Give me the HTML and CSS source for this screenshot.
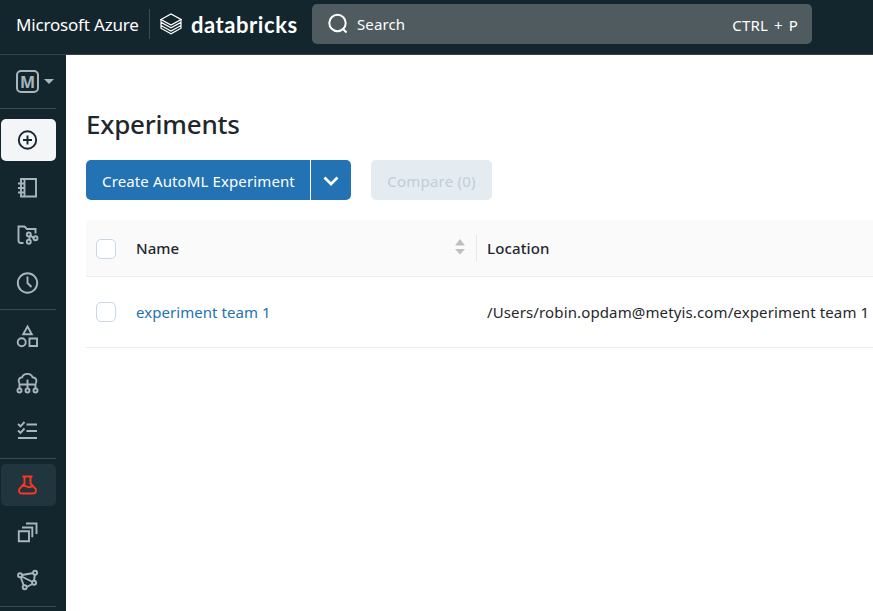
FILE: index.html
```html
<!DOCTYPE html>
<html lang="en">
<head>
<meta charset="utf-8">
<title>Experiments</title>
<link rel="stylesheet" href="styles.css">
</head>
<body>
<header class="topbar">
  <span class="azure">Microsoft Azure</span>
  <span class="brand-divider"></span>
  <svg class="brand-mark" width="22" height="22" viewBox="0 0 22 22"><path d="M1 6.500 11 1l10 5.500-10 5.500z"/><path d="M1 6.500v2.800l10 5.500 10-5.500V6.800M1 9.300v3.200L11 18l10-5.500V9.300M1 12.500v2.700l10 5.500 10-5.500v-2.700"/></svg>
  <span class="brand">databricks</span>
  <div class="search">
    <svg width="22" height="22" viewBox="0 0 22 22"><circle cx="10.500" cy="10" r="8.200"/><path d="m16 16 3.500 3.500"/></svg>
    <span class="search-label">Search</span>
    <span class="shortcut">CTRL + P</span>
  </div>
</header>
<div class="shell">
  <nav class="sidebar">
    <div class="workspace"><span class="workspace-badge">M</span><span class="caret"></span></div>
    <div class="group first">
      <a class="item create"><svg viewBox="0 0 24 24"><circle cx="12" cy="12" r="8.700"/><path d="M12 7.500v9M7.500 12h9"/></svg></a>
      <a class="item"><svg viewBox="0 0 24 24"><path d="M5.500 3h15v17.500h-15zM9 3v17.500M2.500 7.500H9M2.500 12H9M2.500 16.500H9"/></svg></a>
      <a class="item"><svg viewBox="0 0 24 24"><path d="M8 20H5.500q-2.500 0-2.500-2.500V3.500h6l2.500 2.500H20v4.500M14 12.500v4M15 12.500l3 2.500h1"/><circle cx="13.300" cy="11.500" r="2"/><circle cx="13.300" cy="18.700" r="2"/><circle cx="20" cy="15.200" r="2"/></svg></a>
      <a class="item"><svg viewBox="0 0 24 24"><circle cx="12" cy="12" r="9.700"/><path d="M12 5.500V12l4 4"/></svg></a>
    </div>
    <div class="group">
      <a class="item"><svg viewBox="0 0 24 24"><path d="m12 2.500 4.300 7.700H7.700zM14 14.500h7.500V22H14z"/><circle cx="6.200" cy="18.200" r="4"/></svg></a>
      <a class="item"><svg viewBox="0 0 24 24"><path d="M4 12.500c-2-3-.5-6 2.700-6.300C8 1.800 15.500 1.800 17 6.200c3.700.2 5 3.500 3.200 6.300M12 8.500V18M4 18v-4.500h16V18"/><circle cx="4" cy="19.500" r="2"/><circle cx="12" cy="19.500" r="2"/><circle cx="20" cy="19.500" r="2"/></svg></a>
      <a class="item"><svg viewBox="0 0 24 24"><path d="m2.500 5 2.500 2.300L9 3M2.500 11.500 5 13.800l4-4.300M11 5.500h10.500M11 12h10.500M2.500 19h19"/></svg></a>
    </div>
    <div class="group experiments">
      <a class="item current"><svg viewBox="0 0 24 24"><path d="M7 3.500h10M9 3.500v7l-5 5.300C2.500 18 4 20.500 6.500 20.500h11c2.500 0 4-2.500 2.500-4.700l-5-5.300v-7M7.500 13c3-1.200 4 1.500 6.500 1.200 1.500-.2 2-1 3.500-1.200"/></svg></a>
      <a class="item"><svg viewBox="0 0 24 24"><path d="M3.300 11.300h10.200v10H3.300zM6.500 7.500h10.300v9.800M10.500 3.500H21V14"/></svg></a>
      <a class="item"><svg viewBox="0 0 24 24"><path d="m6.500 7 11.500-2M5.200 9l3 8.500M6.200 8.500l11 5.500M19.300 7l-.8 5.800M11 19l6-3"/><circle cx="4.500" cy="7.300" r="2"/><circle cx="19.600" cy="4.700" r="2"/><circle cx="9.200" cy="19.300" r="2"/><circle cx="18.600" cy="14.700" r="2"/></svg></a>
    </div>
    <div class="group"></div>
  </nav>
  <main class="content">
    <h1>Experiments</h1>
    <div class="actions">
      <button class="primary">Create AutoML Experiment</button>
      <button class="menu"><svg width="16" height="12" viewBox="0 0 16 12"><path d="m1.500 2.500 6.500 6.500 6.500-6.500"/></svg></button>
      <button class="compare">Compare (0)</button>
    </div>
    <div class="table">
      <div class="row head">
        <span class="check"></span>
        <span class="name"><span>Name</span><svg class="sort" width="10" height="16" viewBox="0 0 10 16"><path d="M0 6.500 5 0l5 6.500zM0 10h10l-5 5.500z"/></svg></span>
        <span class="location">Location</span>
      </div>
      <div class="row">
        <span class="check"></span>
        <a class="name">experiment team 1</a>
        <span class="location">/Users/robin.opdam@metyis.com/experiment team 1</span>
      </div>
    </div>
  </main>
</div>
</body>
</html>
```

FILE: styles.css
```css
* { box-sizing: border-box; }
body { margin: 0; height: 611px; overflow: hidden; background: #fff; color: #1f272d; font: 15px/20px "Noto Sans", "Open Sans", sans-serif; }
svg { fill: none; stroke: currentColor; flex: none; }
.topbar { height: 55px; display: flex; align-items: flex-start; padding: 4px 0 0 16px; background: #13262d; border-bottom: 1px solid #34464c; color: #fff; }
.azure { width: 133px; line-height: 42px; font-size: 17px; white-space: nowrap; letter-spacing: -.18px; }
.brand-divider { width: 1px; height: 30px; margin-top: 5px; background: #3b4b51; }
.brand-mark { margin: 9px 0 0 10px; stroke-width: 1.2; }
.brand { width: 121px; margin-left: 9px; font: 700 22px/41px Lato, sans-serif; letter-spacing: .55px; white-space: nowrap; }
.search { width: 500px; height: 40px; border-radius: 5px; background: #505b60; display: flex; align-items: center; padding: 0 14px 0 15px; }
.search svg { stroke-width: 2; }
.search-label { margin-left: 8px; font-size: 15px; letter-spacing: .1px; }
.shortcut { margin-left: auto; padding-top: 2px; font-size: 15px; letter-spacing: .2px; word-spacing: 1.800px; }
.shell { display: flex; height: 556px; }
.sidebar { width: 66px; flex: none; background: #13262d; color: #a9b6bd; padding: 0 10px 0 1px; }
.workspace { height: 53px; display: flex; align-items: center; padding-left: 15px; }
.workspace-badge { width: 23px; height: 23px; border: 2px solid; border-radius: 5px; font: 700 16px/21px "Open Sans", sans-serif; display: flex; justify-content: center; }
.caret { margin: -1px 0 0 5px; border: 5px solid transparent; border-top-color: currentColor; border-bottom: 0; }
.group { border-top: 1px solid #3b4a51; padding: 5px 0; display: grid; row-gap: 5.500px; margin-left: -1px; padding-left: 1px; }
.group.first { padding-top: 10px; }
.group.experiments { margin-top: 1px; }
.item { height: 42px; border-radius: 5px; display: flex; align-items: center; justify-content: center; }
.item svg { width: 25px; height: 24px; stroke-width: 1.900; margin-right: 2px; }
.create { background: #f4f5f7; color: #13262d; }
.current { background: #20353e; color: #ff3621; }
.content { flex: 1; min-width: 0; padding: 50px 0 0 20px; }
h1 { margin: 0; font-size: 26px; line-height: 38px; font-weight: 500; letter-spacing: -.22px; }
.actions { display: flex; height: 40px; margin-top: 17px; }
button { border: 0; padding: 0; font: inherit; color: #fff; background: #2272b4; }
.primary { width: 224px; border-radius: 5px 0 0 5px; margin-right: 1px; padding: 2px 0 0 1px; letter-spacing: .12px; }
.menu { width: 40px; border-radius: 0 5px 5px 0; display: flex; align-items: center; justify-content: center; }
.menu svg { stroke-width: 2.700; margin-top: 1px; }
.compare { width: 121px; margin-left: 20px; border-radius: 5px; background: #e4ebf1; color: #c0cdd8; padding-top: 2px; letter-spacing: .2px; }
.table { margin-top: 20px; }
.row { height: 71px; display: grid; grid-template-columns: 50px 340px 1fr; align-items: center; border-bottom: 1px solid #ececec; white-space: nowrap; }
.row.head { height: 57px; background: #fafafa; border-radius: 5px 0 0 0; font-weight: 500; }
.check { width: 20px; height: 20px; margin-left: 10px; border: 1px solid #c8d7e3; border-radius: 5px; background: #fff; }
.head .check { margin-top: 1px; }
a.name { color: #2272b4; letter-spacing: .05px; }
.head .name { display: flex; align-items: center; justify-content: space-between; padding-right: 11px; }
.sort { fill: #bfbfbf; stroke: none; margin-top: -3px; }
.location { padding-left: 11px; letter-spacing: .13px; }
.head .location { position: relative; }
.head .location::before { content: ""; position: absolute; left: 0; top: -3px; width: 1px; height: 26px; background: #e8e8e8; }
```
